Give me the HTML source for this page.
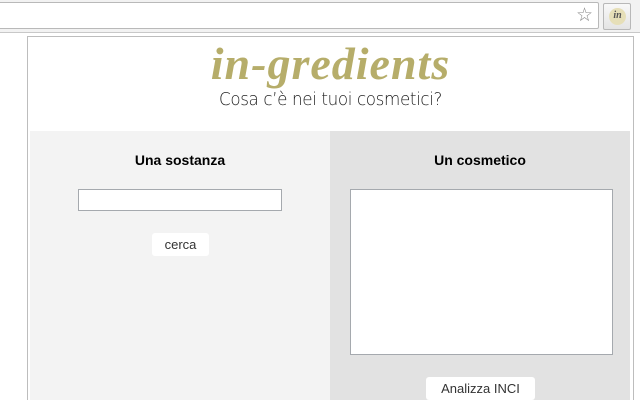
<!DOCTYPE html>
<html style="width:640px;height:400px;overflow:hidden"><head><style>
*{margin:0;padding:0;box-sizing:border-box}
body{width:640px;height:400px;overflow:hidden;background:#fff;font-family:"Liberation Sans",sans-serif;position:relative}
.tb{position:absolute;left:0;top:0;width:640px;height:33px;background:#f2f2f2;border-bottom:1px solid #c8c8c8}
.addr{position:absolute;left:-2px;top:2px;width:601px;height:27px;background:#fff;border:1px solid #b9b9b9;border-radius:2px}
.ext{position:absolute;left:603px;top:3px;width:28px;height:27px;border:1px solid #b8b8b8;border-radius:2px;background:linear-gradient(#f8f8f8,#e4e4e4)}
.ext div{position:absolute;left:5px;top:4px;width:17px;height:17px;border-radius:50%;background:#e6dfb8;font:italic bold 10px "Liberation Serif",serif;color:#555;text-align:center;line-height:16px}
.pop{position:absolute;left:27px;top:36px;width:607px;height:364px;border:1px solid #bdbdbd;border-bottom:none;background:#fff}
h1{position:absolute;left:0;width:100%;top:0px;text-align:center;font:italic bold 46px "Liberation Serif",serif;color:#b6ad6a;letter-spacing:1px}
.sub{position:absolute;left:0;width:100%;top:52px;text-align:center;font:300 18px "DejaVu Sans","Liberation Sans",sans-serif;font-weight:200;color:#222;letter-spacing:-0.4px;transform:scaleX(0.93)}
.l{position:absolute;left:30px;top:131px;width:300px;height:269px;background:#f3f3f3}
.r{position:absolute;left:330px;top:131px;width:300px;height:269px;background:#e2e2e2}
h2{position:absolute;width:100%;top:21px;text-align:center;font:bold 14px "Liberation Sans",sans-serif;color:#000}
.in{position:absolute;left:48px;top:58px;width:204px;height:22px;background:#fff;border:1px solid #a5a9ae}
.ta{position:absolute;left:20px;top:58px;width:263px;height:166px;background:#fff;border:1px solid #a5a9ae}
.btn{position:absolute;background:#fff;border-radius:3px;font:13px "Liberation Sans",sans-serif;color:#333;text-align:center;line-height:24px;height:23px}
</style></head><body>
<div class="tb"><div class="addr"><span style="position:absolute;right:5px;top:1px;font-size:19px;color:#888">☆</span></div>
<div class="ext"><div>in</div></div></div>
<div class="pop">
<h1>in-gredients</h1>
<div class="sub">Cosa c’è nei tuoi cosmetici?</div>
</div>
<div class="l"><h2>Una sostanza</h2><div class="in"></div><div class="btn" style="left:122px;top:102px;width:57px">cerca</div></div>
<div class="r"><h2>Un cosmetico</h2><div class="ta"></div><div class="btn" style="left:96px;top:246px;width:109px">Analizza INCI</div></div>
</body></html>
